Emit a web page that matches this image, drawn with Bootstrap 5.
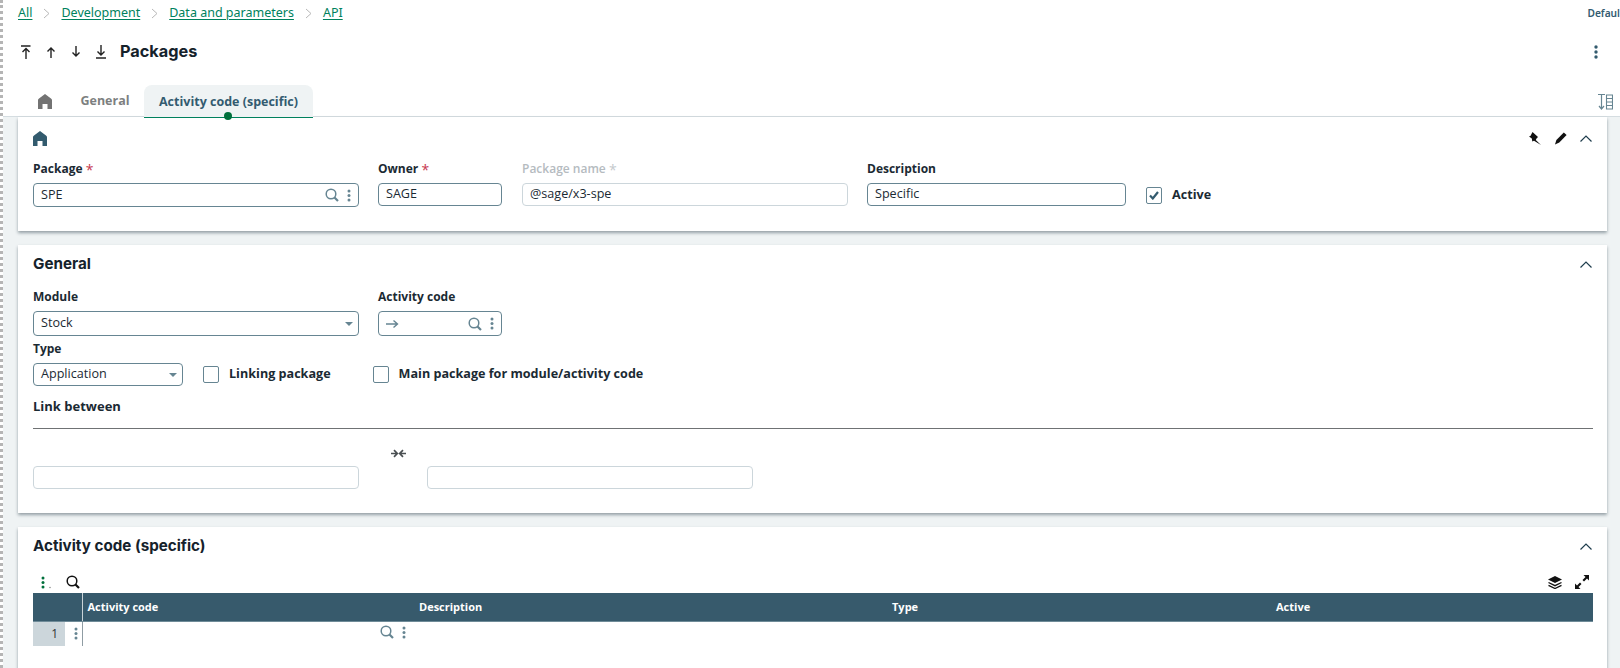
<!DOCTYPE html>
<html lang="en">
<head>
<meta charset="utf-8">
<title>Packages</title>
<link href="https://cdn.jsdelivr.net/npm/bootstrap@5.3.0/dist/css/bootstrap.min.css" rel="stylesheet">
<script src="https://cdn.jsdelivr.net/npm/bootstrap@5.3.0/dist/js/bootstrap.bundle.min.js"></script>
<style>
html,body{height:668px;overflow:hidden;background:#fff}
body{font-family:"Open Sans","Noto Sans",sans-serif;font-size:12px;color:#1b2a33}
.shell{height:668px;border-left:3px dotted #b5b5b5;overflow:hidden;position:relative}
.crumbs{height:25px;padding:2px 0 0 15px;font-size:12.5px;font-family:"Noto Sans",sans-serif;white-space:nowrap}
.crumbs a{color:#00815d;text-underline-offset:2px}
.crumbs .sep{width:29px;display:flex;justify-content:center}
.crumbs .sep svg{width:7px;height:11px}
.defaul{position:absolute;right:0;top:6px;font-size:10.2px;font-weight:600;color:#335b70;white-space:nowrap;font-family:"Noto Sans",sans-serif}
.titlebar{height:54px;padding-left:17px;padding-right:15px}
.titlebar .navbtn{width:25px;display:flex;justify-content:flex-start}
.titlebar h1{font-family:"Inter","Noto Sans",sans-serif;font-size:16.3px;font-weight:700;margin:0;color:#15222b}
.kebab{margin-right:7px}
.tabbar{height:38px;border-bottom:1px solid #d5dde1;padding-left:35px;padding-right:7px}
.tabbar .tabhome{width:36px;height:37px;padding-top:15px}
.tabbar .tabtxt{font-weight:700;font-size:12.5px;color:#7d7f80;width:62px;text-align:center;padding-top:13px;height:37px}
.tabbar .tabon{margin-left:8px;margin-bottom:-2px;width:169px;height:33px;background:#eff3f4;border-radius:8px 8px 0 0;border-bottom:1px solid #00815d;color:#335b70;font-weight:700;font-size:12.5px;text-align:center;padding-top:8px;position:relative}
.tabbar .tabdot{position:absolute;left:80px;bottom:-3px;width:8px;height:8px;border-radius:50%;background:#00703c}
.tabbar .tabside{padding-top:8px}
.pagebg{background:#eff3f4;height:600px;padding:0 13px 0 15px}
.panel{background:#fff;border:0;border-radius:0;box-shadow:0 2px 3px rgba(40,60,70,.45);padding:0 15px}
.p1{height:114px;margin-bottom:14px}
.p2{height:268px;margin-bottom:14px}
.p3{height:200px}
.p1head{height:44px;padding-bottom:2px}
.panelhead{height:35px}
.panelhead h2{font-family:"Inter","Noto Sans",sans-serif;font-size:15.2px;font-weight:700;margin:0;color:#15222b}
.lbl{font-weight:700;font-size:12px;line-height:16px;margin:0 0 6px;color:#1b2a33;display:block;white-space:nowrap}
.lbl.off{color:#b5bbbf;font-weight:600}
.req{color:#c7384f;font-weight:400;font-size:14px;line-height:0;vertical-align:-2px}
.req.off{color:#c4c9cc}
.fld{border:1px solid #668592;border-radius:4px;height:24px;padding:0 7px;background:#fff;display:flex;align-items:center;font-size:12.6px;color:#1b2a33;justify-content:space-between}
.fld.off{border-color:#ccd6db}
.fld.tall{height:25px}
.fld.low{height:23px}
.w326{width:326px}.w124{width:124px}.w150{width:150px}.w259{width:259px}
.gapa{gap:19px}
.nudge{margin-left:1px}
.caret{width:0;height:0;border-left:4px solid transparent;border-right:4px solid transparent;border-top:4px solid #668592;margin-right:-2px}
.tick{width:16px;height:17px;border:1px solid #668592;border-radius:2px;background:#fff;margin:0;display:flex;align-items:center;justify-content:center;flex:none}
.tickl{font-weight:700;font-size:12.6px;margin-left:10px;white-space:nowrap}
.activecell{padding-top:22px}
.typerow{margin-top:5px}
.linkingcell{margin-left:20px;height:23px}
.maincell{margin-left:42px;height:23px}
.linkhead{font-weight:700;font-size:13px;line-height:16px;border-bottom:1px solid #6f7274;padding-bottom:14px;margin-top:12px;width:1560px;color:#1b2a33}
.linkrow{margin-top:20px}
.linkrow .fld{margin-top:17px}
.joiner{width:68px;padding-left:10px}
.modrow{margin-top:9px}
.gridbar{height:22px;width:1560px;margin-top:9px}
.gridmenu{width:33px;padding-left:8px}
.gridright{gap:13px;padding-right:4px}
.datagrid{width:1560px;margin:0;table-layout:fixed;border-collapse:collapse}
.c1{width:32px}.c2{width:17px}.c3{width:332px}.c4{width:473px}.c5{width:384px}
.datagrid th{background:#375a6c;color:#fff;font-size:11px;font-weight:700;height:28px;padding:0 0 0 5px;border:0;border-bottom:1px solid #6f8b98;vertical-align:middle}
.datagrid th.rule{border-left:1px solid #c9d3d8}
.datagrid td{height:25px;padding:0;border:0;vertical-align:middle;background:#fff}
.datagrid td.num{background:#ccd6db;text-align:right;padding-right:7px;font-size:12px;color:#333}
.datagrid td.kbb{border-right:1px solid #8f9ca3;padding-left:9px}
.rowtools{padding-right:8px;margin-top:-3px}
.iconrow{gap:13px}
svg{display:block}
</style>
</head>
<body>
<div class="shell">
  <nav class="crumbs d-flex align-items-center">
    <a href="#">All</a>
    <span class="sep"><svg viewBox="0 0 7 11"><path d="M1 1l5 4.500L1 10" fill="none" stroke="#b8b8b8"/></svg></span>
    <a href="#">Development</a>
    <span class="sep"><svg viewBox="0 0 7 11"><path d="M1 1l5 4.500L1 10" fill="none" stroke="#b8b8b8"/></svg></span>
    <a href="#">Data and parameters</a>
    <span class="sep"><svg viewBox="0 0 7 11"><path d="M1 1l5 4.500L1 10" fill="none" stroke="#b8b8b8"/></svg></span>
    <a href="#">API</a>
  </nav>
  <div class="defaul">Defaul</div>

  <div class="titlebar d-flex align-items-center">
    <span class="navbtn"><svg width="12" height="14" viewBox="0 0 12 14" fill="none" stroke="#222" stroke-width="1.400"><path d="M1 1h9.500M6 14V4M2.500 7l3.500-3.500L9.500 7"/></svg></span>
    <span class="navbtn"><svg width="12" height="14" viewBox="0 0 12 14" fill="none" stroke="#222" stroke-width="1.400"><path d="M6 13V3M2.500 6.500L6 3l3.500 3.500"/></svg></span>
    <span class="navbtn"><svg width="12" height="14" viewBox="0 0 12 14" fill="none" stroke="#222" stroke-width="1.400"><path d="M6 1v10M2.500 7.500L6 11l3.500-3.500"/></svg></span>
    <span class="navbtn"><svg width="12" height="14" viewBox="0 0 12 14" fill="none" stroke="#222" stroke-width="1.400"><path d="M6 0v10M2.500 6.500L6 10l3.500-3.500M1 13h10"/></svg></span>
    <h1>Packages</h1>
    <span class="ms-auto kebab"><svg width="4" height="14" viewBox="0 0 4 14" fill="#335b6e"><circle cx="2" cy="2" r="1.700"/><circle cx="2" cy="7" r="1.700"/><circle cx="2" cy="12" r="1.700"/></svg></span>
  </div>

  <div class="tabbar d-flex align-items-end">
    <span class="tabhome"><svg width="14" height="15" viewBox="0 0 14 15" fill="#737373"><path d="M7 0l6 4.500c.6.500 1 1 1 2V15H9.500v-5h-5v5H0V6.500c0-1 .4-1.500 1-2z"/></svg></span>
    <span class="tabtxt">General</span>
    <span class="tabon">Activity code (specific)<span class="tabdot"></span></span>
    <span class="ms-auto align-self-center tabside"><svg width="15" height="16" viewBox="0 0 15 16" fill="none" stroke="#668592"><path d="M0 .500h7M3.500 1v14M1 12l2.500 3L6 12" stroke-width="1.200"/><path d="M8.500 1h6v14h-6zM8.500 4.500h6M8.500 8h6M8.500 11.500h6" stroke-width="1.100"/></svg></span>
  </div>

  <div class="pagebg">
    <section class="panel p1">
      <div class="p1head d-flex align-items-center">
        <svg width="14" height="15" viewBox="0 0 14 15" fill="#335b6e"><path d="M7 0l6 4.500c.6.500 1 1 1 2V15H9.500v-5h-5v5H0V6.500c0-1 .4-1.500 1-2z"/></svg>
        <span class="ms-auto d-flex align-items-center iconrow">
          <svg width="12" height="13" viewBox="0 0 12 13"><path d="M3.500 0L9 5 7.500 6.500 6.800 8 12 13 5 8.800 3.300 9.500 2.800 6.500 0 4.500 1.600 3.800z" fill="#111"/></svg>
          <svg width="13" height="13" viewBox="0 0 13 13"><path d="M9.800 .500l2.800 2.500-7.300 7.500L1 12.500 2.400 8z" fill="#111"/></svg>
          <svg width="12" height="7" viewBox="0 0 12 7" fill="none" stroke="#1f3d4d" stroke-width="1.200"><path d="M.5 6.500L6 1l5.500 5.500"/></svg>
        </span>
      </div>
      <div class="d-flex gapa">
        <div class="w326"><label class="lbl">Package <span class="req">*</span></label>
          <div class="fld"><span>SPE</span><span class="d-flex align-items-center gap-2"><svg width="14" height="14" viewBox="0 0 14 14" fill="none" stroke="#668592"><circle cx="6" cy="6" r="4.800" stroke-width="1.500"/><path d="M9.500 9.500l3.500 3.500" stroke-width="2.200"/></svg><svg width="4" height="13" viewBox="0 0 4 13" fill="#668592"><circle cx="2" cy="2" r="1.500"/><circle cx="2" cy="6.500" r="1.500"/><circle cx="2" cy="11" r="1.500"/></svg></span></div></div>
        <div class="w124"><label class="lbl">Owner <span class="req">*</span></label><div class="fld low">SAGE</div></div>
        <div class="w326 nudge"><label class="lbl off">Package name <span class="req off">*</span></label><div class="fld off low">@sage/x3-spe</div></div>
        <div class="w259"><label class="lbl">Description</label><div class="fld low">Specific</div></div>
        <div class="d-flex align-items-center nudge activecell"><span class="tick"><svg width="10" height="9" viewBox="0 0 10 9" fill="none" stroke="#335b6e" stroke-width="2.200"><path d="M1 4.500L3.800 7.500 9 1"/></svg></span><span class="tickl">Active</span></div>
      </div>
    </section>

    <section class="panel p2">
      <div class="panelhead d-flex align-items-center pt-1"><h2>General</h2><span class="ms-auto"><svg width="12" height="7" viewBox="0 0 12 7" fill="none" stroke="#1f3d4d" stroke-width="1.200"><path d="M.5 6.500L6 1l5.500 5.500"/></svg></span></div>
      <div class="d-flex gapa modrow">
        <div class="w326"><label class="lbl">Module</label><div class="fld tall"><span>Stock</span><span class="caret"></span></div></div>
        <div class="w124"><label class="lbl">Activity code</label><div class="fld tall"><svg width="13" height="10" viewBox="0 0 13 10" fill="none" stroke="#668592" stroke-width="1.400"><path d="M0 5h11M7.500 1.500L11.500 5 7.500 8.500"/></svg><span class="d-flex align-items-center gap-2"><svg width="14" height="14" viewBox="0 0 14 14" fill="none" stroke="#668592"><circle cx="6" cy="6" r="4.800" stroke-width="1.500"/><path d="M9.500 9.500l3.500 3.500" stroke-width="2.200"/></svg><svg width="4" height="13" viewBox="0 0 4 13" fill="#668592"><circle cx="2" cy="2" r="1.500"/><circle cx="2" cy="6.500" r="1.500"/><circle cx="2" cy="11" r="1.500"/></svg></span></div></div>
      </div>
      <div class="d-flex align-items-end typerow">
        <div class="w150"><label class="lbl">Type</label><div class="fld low"><span>Application</span><span class="caret"></span></div></div>
        <div class="d-flex align-items-center linkingcell"><span class="tick"></span><span class="tickl">Linking package</span></div>
        <div class="d-flex align-items-center maincell"><span class="tick"></span><span class="tickl">Main package for module/activity code</span></div>
      </div>
      <div class="linkhead">Link between</div>
      <div class="d-flex linkrow">
        <div class="w326 fld off low"></div>
        <div class="joiner d-flex justify-content-center"><svg width="15" height="9" viewBox="0 0 15 9" fill="none" stroke="#4a4f52" stroke-width="1.700"><path d="M0 4.500h6M3 1.200l3.300 3.300L3 7.800M15 4.500H9M12 1.200L8.700 4.500 12 7.800"/></svg></div>
        <div class="w326 fld off low"></div>
      </div>
    </section>

    <section class="panel p3">
      <div class="panelhead d-flex align-items-center pt-1"><h2>Activity code (specific)</h2><span class="ms-auto"><svg width="12" height="7" viewBox="0 0 12 7" fill="none" stroke="#1f3d4d" stroke-width="1.200"><path d="M.5 6.500L6 1l5.500 5.500"/></svg></span></div>
      <div class="gridbar d-flex align-items-center">
        <span class="gridmenu d-flex align-items-end"><svg width="12" height="13" viewBox="0 0 12 13"><g fill="#00703c"><circle cx="2" cy="2" r="1.500"/><circle cx="2" cy="6.500" r="1.500"/><circle cx="2" cy="11" r="1.500"/></g><circle cx="9" cy="11.500" r=".7" fill="#777"/></svg></span>
        <svg width="14" height="14" viewBox="0 0 14 14" fill="none" stroke="#111"><circle cx="6" cy="6" r="4.800" stroke-width="1.500"/><path d="M9.500 9.500l3.500 3.500" stroke-width="2.200"/></svg>
        <span class="ms-auto d-flex align-items-center gridright">
          <svg width="14" height="13" viewBox="0 0 14 13"><path d="M7 0l7 3.500L7 7 0 3.500z" fill="#111"/><path d="M.5 6.500L7 9.700l6.500-3.200M.5 9.300L7 12.500l6.500-3.200" fill="none" stroke="#111" stroke-width="1.300"/></svg>
          <svg width="14" height="14" viewBox="0 0 14 14"><path d="M8.500 0H14v5.500L12 3.500 9 6.500 7.500 5l3-3zM5.500 14H0V8.500L2 10.500l3-3L6.500 9l-3 3z" fill="#111"/></svg>
        </span>
      </div>
      <table class="table datagrid">
        <colgroup><col class="c1"><col class="c2"><col class="c3"><col class="c4"><col class="c5"><col></colgroup>
        <thead><tr><th colspan="2"></th><th class="rule">Activity code</th><th>Description</th><th>Type</th><th>Active</th></tr></thead>
        <tbody><tr><td class="num">1</td><td class="kbb"><svg width="4" height="13" viewBox="0 0 4 13" fill="#668592"><circle cx="2" cy="2" r="1.500"/><circle cx="2" cy="6.500" r="1.500"/><circle cx="2" cy="11" r="1.500"/></svg></td>
        <td><span class="d-flex justify-content-end align-items-center gap-2 rowtools"><svg width="14" height="14" viewBox="0 0 14 14" fill="none" stroke="#668592"><circle cx="6" cy="6" r="4.800" stroke-width="1.500"/><path d="M9.500 9.500l3.500 3.500" stroke-width="2.200"/></svg><svg width="4" height="13" viewBox="0 0 4 13" fill="#668592"><circle cx="2" cy="2" r="1.500"/><circle cx="2" cy="6.500" r="1.500"/><circle cx="2" cy="11" r="1.500"/></svg></span></td><td></td><td></td><td></td></tr></tbody>
      </table>
    </section>
  </div>
</div>
</body>
</html>
